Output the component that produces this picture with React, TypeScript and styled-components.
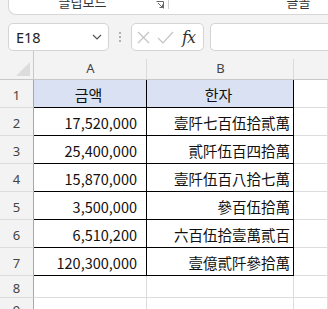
import React from 'react';
import styled, { createGlobalStyle } from 'styled-components';

const GlobalStyle = createGlobalStyle`
  html, body {
    margin: 0;
    padding: 0;
    background: #f3f3f3;
    overflow: hidden;
  }
  body {
    font-family: "Noto Sans CJK KR", "Noto Sans", sans-serif;
  }
`;

const Page = styled.div`
  width: 328px;
  height: 309px;
  overflow: hidden;
  display: flex;
  flex-direction: column;
  & > * {
    flex-shrink: 0;
  }
`;

/* ribbon strip cut off at the top */
const Ribbon = styled.div`
  margin-left: 8px;
  height: 14px;
  background: #fff;
  border: 1px solid #d6d6d6;
  border-top: none;
  border-right: none;
  border-bottom-left-radius: 8px;
  display: flex;
  overflow: hidden;
  box-sizing: content-box;
`;

const RibbonGroup = styled.div<{ $width?: number }>`
  position: relative;
  width: ${(p) => (p.$width ? `${p.$width}px` : 'auto')};
  flex: ${(p) => (p.$width ? 'none' : '1')};
  display: flex;
  justify-content: center;
  align-items: flex-start;
  border-right: ${(p) => (p.$width ? '1px solid #d0d0d0' : 'none')};
  height: 9px;
`;

const GroupLabel = styled.span<{ $shift?: number }>`
  font-size: 13px;
  line-height: 13px;
  color: #333;
  margin-top: -5px;
  margin-left: ${(p) => p.$shift ?? 0}px;
  white-space: nowrap;
`;

const Launcher = styled.svg`
  position: absolute;
  right: 4px;
  top: 1px;
`;

const FormulaBar = styled.div`
  margin-top: 8px;
  height: 28px;
  display: flex;
  align-items: stretch;
  padding-left: 8px;
`;

const NameBox = styled.div`
  width: 101px;
  box-sizing: border-box;
  background: #fff;
  border: 1px solid #d4d4d4;
  border-radius: 5px;
  display: flex;
  align-items: center;
  justify-content: space-between;
  padding: 0 6px 0 7px;
  font-family: "Noto Sans", "Noto Sans CJK KR", sans-serif;
  font-size: 14.5px;
  color: #222;
`;

const Dots = styled.div`
  width: 22px;
  display: flex;
  flex-direction: column;
  align-items: center;
  justify-content: center;
  gap: 2px;
  span {
    width: 2px;
    height: 2px;
    border-radius: 1px;
    background: #9a9a9a;
  }
`;

const ButtonGroup = styled.div`
  width: 73px;
  box-sizing: border-box;
  background: #fff;
  border: 1px solid #d4d4d4;
  border-radius: 5px;
  display: flex;
  align-items: center;
  padding-left: 5px;
  gap: 7px;
`;

const Fx = styled.span`
  font-family: "DejaVu Serif", "Liberation Serif", serif;
  font-style: italic;
  font-size: 16px;
  color: #333;
  margin-left: 1px;
  letter-spacing: -1px;
`;

const FormulaInput = styled.div`
  margin-left: 6px;
  flex: 1;
  background: #fff;
  border: 1px solid #d4d4d4;
  border-right: none;
  border-radius: 5px 0 0 5px;
`;

const Sheet = styled.div`
  display: grid;
  grid-template-columns: 34px 113px 147px 1fr;
  grid-template-rows: 29px repeat(7, 28px) 22px 22px;
`;

const Corner = styled.div`
  border-right: 1px solid #c8c8c8;
  border-bottom: 1px solid #c8c8c8;
  position: relative;
  &::after {
    content: '';
    position: absolute;
    right: 3px;
    bottom: 3px;
    width: 0;
    height: 0;
    border-left: 14px solid transparent;
    border-bottom: 14px solid #dcdcdc;
  }
`;

const ColHead = styled.div<{ $last?: boolean }>`
  display: flex;
  align-items: center;
  justify-content: center;
  padding-top: 5px;
  border-bottom: 1px solid #c8c8c8;
  font-family: "Noto Sans", sans-serif;
  font-size: 13px;
  color: #444;
  position: relative;
  &::after {
    content: '';
    position: absolute;
    right: 0;
    top: 8px;
    bottom: 0;
    width: 1px;
    background: #dadada;
    display: ${(p) => (p.$last ? 'none' : 'block')};
  }
`;

const RowHead = styled.div`
  border-right: 1px solid #a8a8a8;
  border-bottom: 1px solid #dcdcdc;
  display: flex;
  align-items: center;
  justify-content: center;
  padding-top: 3px;
  font-family: "Noto Sans", sans-serif;
  font-size: 13px;
  color: #444;
  box-sizing: border-box;
`;

const Cell = styled.div<{ $head?: boolean; $align?: 'left' | 'right' | 'center'; $table?: boolean; $padRight?: number }>`
  box-sizing: border-box;
  background: ${(p) => (p.$head ? '#d9e1f2' : '#fff')};
  border-right: 1px solid ${(p) => (p.$table ? '#000' : '#dcdcdc')};
  border-bottom: 1px solid ${(p) => (p.$table ? '#000' : '#dcdcdc')};
  display: flex;
  align-items: center;
  justify-content: ${(p) =>
    p.$align === 'right' ? 'flex-end' : p.$align === 'center' ? 'center' : 'flex-start'};
  padding-right: ${(p) => p.$padRight ?? 3}px;
  padding-top: 2px;
  font-family: "Noto Sans CJK KR", "Noto Sans", sans-serif;
  font-size: ${(p) => (p.$head ? 15 : 14.5)}px;
  color: #111;
  white-space: nowrap;
  overflow: hidden;
`;

const rows = [
  ['17,520,000', '壹阡七百伍拾貳萬'],
  ['25,400,000', '貳阡伍百四拾萬'],
  ['15,870,000', '壹阡伍百八拾七萬'],
  ['3,500,000', '參百伍拾萬'],
  ['6,510,200', '六百伍拾壹萬貳百'],
  ['120,300,000', '壹億貳阡參拾萬'],
];

export default function App() {
  return (
    <Page>
      <GlobalStyle />
      <Ribbon>
        <RibbonGroup $width={159}>
          <GroupLabel $shift={-12}>클립보드</GroupLabel>
          <Launcher width="8" height="8" viewBox="0 0 8 8">
            <path d="M0.5 0.5H7.5V7.5" fill="none" stroke="#666" strokeWidth="1" />
            <path d="M2 2L6.5 6.5M3.5 6.5H6.5V3.5" fill="none" stroke="#666" strokeWidth="1" />
          </Launcher>
        </RibbonGroup>
        <RibbonGroup>
          <GroupLabel $shift={100}>글꼴</GroupLabel>
        </RibbonGroup>
      </Ribbon>

      <FormulaBar>
        <NameBox>
          <span>E18</span>
          <svg width="10" height="6" viewBox="0 0 10 6">
            <path d="M1 1L5 5L9 1" fill="none" stroke="#555" strokeWidth="1.2" />
          </svg>
        </NameBox>
        <Dots>
          <span />
          <span />
          <span />
        </Dots>
        <ButtonGroup>
          <svg width="13" height="13" viewBox="0 0 13 13">
            <path d="M1 1L12 12M12 1L1 12" stroke="#c4c4c4" strokeWidth="1.2" />
          </svg>
          <svg width="17" height="13" viewBox="0 0 17 13">
            <path d="M1 7L6 12L16 1" fill="none" stroke="#c4c4c4" strokeWidth="1.2" />
          </svg>
          <Fx>fx</Fx>
        </ButtonGroup>
        <FormulaInput />
      </FormulaBar>

      <Sheet>
        <Corner />
        <ColHead>A</ColHead>
        <ColHead>B</ColHead>
        <ColHead $last />

        <RowHead>1</RowHead>
        <Cell $head $table $align="center">금액</Cell>
        <Cell $head $table $align="center">한자</Cell>
        <Cell />

        {rows.map(([amount, hanja], i) => (
          <React.Fragment key={i}>
            <RowHead>{i + 2}</RowHead>
            <Cell $table $align="right" $padRight={9}>{amount}</Cell>
            <Cell $table $align="right">{hanja}</Cell>
            <Cell />
          </React.Fragment>
        ))}

        {[8, 9].map((n) => (
          <React.Fragment key={n}>
            <RowHead>{n}</RowHead>
            <Cell />
            <Cell />
            <Cell />
          </React.Fragment>
        ))}
      </Sheet>
    </Page>
  );
}
